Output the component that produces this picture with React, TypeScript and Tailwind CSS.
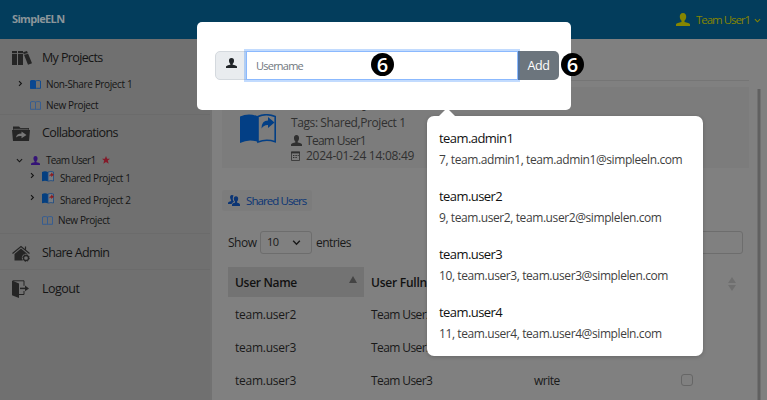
import React from "react";

const PersonIcon = ({ className }: { className: string }) => (
  <svg viewBox="0 0 14 13" preserveAspectRatio="none" fill="currentColor" className={`shrink-0 ${className}`}>
    <path d="M7 0C4.700 0 3.600 1.700 3.800 4c.15 1.600.8 2.900 1.700 3.700v1.200C3 9.400.3 10 0 11.200V13h14v-1.800c-.3-1.200-3-1.800-5.500-2.300V7.700c.9-.8 1.550-2.100 1.700-3.700C10.400 1.700 9.300 0 7 0z" />
  </svg>
);

const BookIcon = ({ className, half }: { className: string; half?: boolean }) => (
  <svg viewBox="0 0 11 9" className={`shrink-0 ${className}`} fill="none" stroke="currentColor" strokeWidth="0.9">
    <path d="M.5 1C2.500.3 4.200.4 5.500 1.100 6.800.4 8.500.3 10.500 1v7.300H6.600l-1.100.3-1.100-.3H.5z" />
    <path d="M5.500 1.100v7.200" />
    {half && <path d="M.5 1C2.500.3 4.200.4 5.500 1.100v7.200H.5z" fill="currentColor" />}
  </svg>
);

const SharedBook = () => (
  <svg viewBox="0 0 12 11" className="h-[11px] w-[12px] shrink-0">
    <path d="M0 1Q3-.3 6 1v9.300Q3 9 0 10.300z" fill="#043f80" />
    <path d="M6 1Q9-.2 11.500 1v9Q9 9 6 10.200z" fill="#777c82" stroke="#1b4a84" strokeWidth="0.8" />
    <path d="M7.200 5.500q0-2.500 2-2.500V1.500L12 3.700 9.200 6V4.500q-1.200 0-2 1z" fill="#8b1d20" />
  </svg>
);

const Chevron = ({ className = "", down, size = 7 }: { className?: string; down?: boolean; size?: number }) => (
  <svg width={size} height={size} viewBox="0 0 7 7" fill="none" stroke="currentColor" strokeWidth="1.1" className={`shrink-0 ${className}`}>
    <path d={down ? "M.9 2.200 3.500 4.800 6.100 2.200" : "M2 1.100 4.400 3.500 2 5.900"} />
  </svg>
);

const Six = () => (
  <span className="flex size-[23px] items-center justify-center rounded-full bg-black font-['Open_Sans'] text-[20px] leading-none font-semibold text-white">
    6
  </span>
);

const suggestions = [
  { name: "team.admin1", detail: "7, team.admin1, team.admin1@simpleeln.com" },
  { name: "team.user2", detail: "9, team.user2, team.user2@simplelen.com" },
  { name: "team.user3", detail: "10, team.user3, team.user3@simplelen.com" },
  { name: "team.user4", detail: "11, team.user4, team.user4@simpleln.com" },
];

const users = [
  { name: "team.user2", full: "Team User2", mode: "" },
  { name: "team.user3", full: "Team User3", mode: "" },
  { name: "team.user3", full: "Team User3", mode: "write" },
];

function Sidebar() {
  return (
    <aside className="w-[210px] shrink-0 bg-[#707070] text-[#151515]">
      <div className="flex h-[37px] items-center pl-3 pt-px">
        <svg viewBox="0 0 20 14" className="h-[14px] w-5" fill="#252525">
          <path d="M0 0h5v14H0zM6 0h5v14H6zM11 1.300 15 0l5 12.300-4 1.400z" />
          <path d="M0 2.500h5M6 2.500h5M12 3.500l4-1.200" stroke="#707070" strokeWidth=".8" />
        </svg>
        <span className="ml-[10px] text-[12.5px] tracking-[-0.05em]">My Projects</span>
      </div>
      <div className="flex h-[17px] items-center pl-[17px] text-[10px] tracking-[-0.037em]">
        <Chevron className="mt-[-2px]" />
        <BookIcon half className="ml-[6px] h-[9px] w-[11px] text-[#0a4791]" />
        <span className="ml-[5px]">Non-Share Project 1</span>
      </div>
      <div className="flex h-[22px] items-center border-b border-[#6b6b6b] pl-[30px] pt-[4px] text-[10px]">
        <BookIcon className="h-[9px] w-[11px] text-[#315b94]" />
        <span className="ml-[5px] tracking-[-0.035em]">New Project</span>
      </div>
      <div className="flex h-[36px] items-center pt-px pl-3">
        <svg viewBox="0 0 18 15" className="h-[15px] w-[18px]">
          <path d="M1 2V.5h6L8.500 2H17v2h1l-1 11H1L0 4h1z" fill="#252525" />
          <path d="M1.500 3.300h15" stroke="#707070" strokeWidth=".7" />
          <path d="M4 11.500q.5-4 5.500-4V5.500L14.500 9l-5 3.300v-2.200q-3.500-.2-5.500 1.400z" fill="#777" />
        </svg>
        <span className="ml-3 text-[12.5px] tracking-[-0.05em]">Collaborations</span>
      </div>
      <div className="flex h-[18px] items-center pl-4 text-[10px]">
        <Chevron down />
        <PersonIcon className="ml-[8px] h-[9px] w-[9px] text-[#351477]" />
        <span className="ml-[6px] tracking-[-0.065em]">Team User1</span>
        <svg viewBox="0 0 24 24" className="ml-[6px] size-[8px]" fill="#841b2a"><path d="m12 0 3.500 8H24l-6.500 5.700L20 23l-8-5-8 5 2.500-9.300L0 8h8.500z" /></svg>
      </div>
      {["Shared Project 1", "Shared Project 2"].map((name) => (
        <div key={name} className="flex h-[22px] items-center pb-[6px] pl-[29px] text-[10px]">
          <Chevron className="mt-[-3px]" />
          <span className="ml-[6px] flex -translate-y-px"><SharedBook /></span>
          <span className="ml-[6px] pt-[2px] tracking-[-0.037em]">{name}</span>
        </div>
      ))}
      <div className="flex h-[21px] items-center border-b border-[#6b6b6b] pb-[5px] pl-[42px] text-[10px]">
        <BookIcon className="h-[9px] w-[11px] text-[#315b94]" />
        <span className="ml-[5px] tracking-[-0.04em]">New Project</span>
      </div>
      <div className="flex h-[36px] items-center border-b border-[#6b6b6b] pl-3 pt-[3px]">
        <svg viewBox="0 0 18 17" className="h-[17px] w-[18px]" fill="#252525">
          <path d="M2.500 9 9 3.500 15.500 9v6.500h-13z" />
          <path d="m.5 8.500 8.500-7 8.500 7M13.500 4.500v-3" fill="none" stroke="#252525" strokeWidth="1.200" />
          <circle cx="14" cy="13" r="2.700" fill="#707070" stroke="#707070" strokeWidth="3" />
          <circle cx="14" cy="13" r="2.500" fill="#707070" stroke="#252525" strokeWidth="1.300" />
          <circle cx="14" cy="13" r="3.300" fill="none" stroke="#252525" strokeDasharray="1.3 1.3" />
        </svg>
        <span className="ml-3 text-[12.5px] tracking-[-0.055em]">Share Admin</span>
      </div>
      <div className="flex h-[36px] items-center pl-3 pt-[2px]">
        <svg viewBox="0 0 17 18" className="h-[18px] w-[17px]">
          <path d="m0 .5 7 3V18l-7-2.800z" fill="#252525" />
          <path d="M1 .8h11v5M12 11v3.500H7" fill="none" stroke="#252525" />
          <path d="M8 8.400h6" stroke="#252525" strokeWidth="1.500" />
          <path d="m13 5.600 4 2.800-4 2.800z" fill="#252525" />
        </svg>
        <span className="ml-[13px] pt-px text-[12.5px] tracking-[-0.04em]">Logout</span>
      </div>
    </aside>
  );
}

function Main() {
  return (
    <main className="relative flex-1 border-l-2 border-[#727272] bg-[#808080] text-[12px] text-[#191919]">
      <div className="ml-4 mr-[18px] h-[42px] border-b border-[#757575]" />
      <section className="ml-[10px] mr-[18px] mt-[6px] flex h-[81px] bg-[#7c7c7c] pl-[18px]">
        <svg viewBox="0 0 36 30" className="mt-[27px] h-[30px] w-9 shrink-0">
          <path d="M0 2.500Q9-1.500 18 2.500v25.500Q9 24.500 0 29z" fill="#033f85" />
          <path d="M18 2.500q8-3.500 17.200 0v25.200q-9-3-17.200.3z" fill="none" stroke="#033f85" strokeWidth="1.600" />
          <path d="M21.500 14.500q0-8 6.500-8V3l6.500 5.500-6.500 5.500v-3q-4-.4-6.500 3.500z" fill="#033f85" />
        </svg>
        <div className="ml-[15px] text-[#303030]">
          <h2 className="h-[27px] pt-[3px] text-[15px] leading-[24px] font-semibold tracking-[-0.05em]">Shared Project 1, 2024</h2>
          <p className="h-[18px] leading-[18px] tracking-[-0.034em]">Tags: Shared,Project 1</p>
          <p className="flex h-[17px] items-center leading-[17px] tracking-[-0.06em]"><PersonIcon className="mr-[4px] h-[11px] w-[11px]" />Team User1</p>
          <p className="flex h-[13px] items-center leading-[13px]">
            <svg viewBox="0 0 9 10" className="mr-[6px] h-[10px] w-[9px] shrink-0"><path d="M.5 1h8v8.500h-8z" fill="none" stroke="#303030" strokeWidth=".8" /><path d="M0 1.500h9" stroke="#303030" strokeWidth="1.800" /><path d="M2 4.500h6M2 6.500h4" stroke="#303030" strokeDasharray="1 .6" /></svg>
            <span className="tracking-[-0.022em]">2024-01-24 14:08:49</span>
          </p>
        </div>
      </section>
      <div className="ml-[10px] mt-[22px] flex h-[21px] w-[90px] items-center rounded-[2px] bg-[#7c7c7c] pl-[6px] text-[#0b3575]">
        <svg viewBox="0 0 12 11" className="h-[11px] w-[12px] shrink-0" fill="currentColor">
          <path d="M4 0C2.300 0 1.800 1.500 2.200 3c.2 1 .6 1.600.9 2v1C1.500 6.500.2 7 0 8v1h3.500q.7-1.500 2.300-2l.1-.4C4.900 5.400 4.500 4 4.900 2.400 5 1.600 5.300 1.100 5.700.8 5.300.3 4.700 0 4 0z" />
          <path d="M8 1.200c-1.700 0-2.500 1.400-2.100 3 .2 1.200.6 1.800 1.100 2.300v1C5.500 8 4 8.600 4 9.700V11h8V9.700c0-1.100-1.500-1.700-3-2.200v-1c.5-.5.9-1.100 1.100-2.300.4-1.600-.4-3-2.100-3z" />
        </svg>
        <span className="ml-[6px] text-[11.5px] tracking-[-0.08em]">Shared Users</span>
      </div>
      <div className="ml-4 mr-6 mt-[20px] flex h-[23px] items-center">
        <span className="w-[32px] tracking-[-0.04em]">Show</span>
        <div className="flex h-[23px] w-[52px] items-center justify-between rounded-[3px] border border-[#6d6d6d] pl-[6px] pr-[10px] text-[11px] tracking-[-0.04em]">
          10 <Chevron down size={9} />
        </div>
        <span className="ml-[4px] tracking-[-0.045em]">entries</span>
        <div className="ml-auto h-[23px] w-[100px] rounded-[3px] border border-[#6d6d6d]" />
      </div>
      <div className="ml-4 mr-[6px] mt-[13px]">
        <div className="flex h-[30px] items-center font-semibold text-[#111]">
          <div className="flex h-full w-[136px] items-center justify-between bg-[#737373] pt-[2px] pl-[7px] pr-[7px] tracking-[-0.025em]">
            User Name
            <span className="mb-[7px] border-x-4 border-b-[7px] border-x-transparent border-b-[#444]" />
          </div>
          <div className="w-[163px] pt-[2px] pl-[7px] tracking-[-0.02em]">User Fullname</div>
          <div className="ml-auto mr-[25px] mt-1 flex flex-col gap-[2px]">
            <span className="border-x-4 border-b-[6px] border-x-transparent border-b-[#6f6f6f]" />
            <span className="border-x-4 border-t-[6px] border-x-transparent border-t-[#6f6f6f]" />
          </div>
        </div>
        {users.map((u, i) => (
          <div key={i} className="flex h-[33px] items-center pt-[2px]">
            <div className="w-[136px] pl-[7px] tracking-[-0.02em]">{u.name}</div>
            <div className="w-[163px] pl-[7px] tracking-[-0.05em]">{u.full}</div>
            <div className="w-[154px] pl-[7px] tracking-[-0.04em]">{u.mode}</div>
            {u.mode && <span className="mt-[-2px] size-3 rounded-[3px] border border-[#666]" />}
          </div>
        ))}
      </div>
      <div className="absolute top-[50px] right-[6px] h-[311px] w-[4px] border-x border-[#707070] bg-[#606060]" />
    </main>
  );
}

function AddUserDialog() {
  return (
    <div className="absolute top-[22px] left-[197px] h-[88px] w-[374px] rounded-[5px] bg-white pt-[29px] pl-[18px]">
      <div className="flex h-[29px] w-[344px]">
        <div className="flex w-[32px] items-center justify-center rounded-l-[5px] border border-[#d4d9de] bg-[#e9ecef] pb-[6px] text-[#212529]">
          <PersonIcon className="h-[10px] w-[11px]" />
        </div>
        <div className="z-10 -ml-px flex w-[272px] items-center border border-[#8bb9fe] bg-white pl-[9px] pt-[2px] text-[11px] tracking-[-0.07em] text-[#70777e] shadow-[0_0_0_2px_rgba(13,110,253,.25)]">
          Username
        </div>
        <button className="w-[41px] rounded-r-[5px] bg-[#6c757d] pt-[2px] text-[12.5px] font-medium tracking-[-0.03em] text-white">Add</button>
      </div>
      <div className="absolute top-[31px] left-[174px] z-20"><Six /></div>
      <div className="absolute top-[31px] left-[364px] z-20"><Six /></div>
    </div>
  );
}

function Suggestions() {
  return (
    <div className="absolute top-[116px] left-[427px] h-[240px] w-[276px] rounded-[7px] bg-white pl-[12px] pt-[12px] shadow-[0_1px_4px_rgba(0,0,0,.2)]">
      <span className="absolute -top-[8px] left-[11px] border-x-[9px] border-b-[9px] border-x-transparent border-b-white" />
      {suggestions.map((s) => (
        <div key={s.name} className="h-[58px] whitespace-nowrap">
          <div className="text-[13px] leading-[20px] tracking-[-0.043em] text-[#111]">{s.name}</div>
          <div className="text-[12px] leading-[24px] tracking-[-0.034em] text-[#3f3f3f]">{s.detail}</div>
        </div>
      ))}
    </div>
  );
}

export default function App() {
  return (
    <div className="relative flex h-[400px] w-[767px] flex-col overflow-hidden bg-[#808080] font-['Open_Sans','Noto_Sans',sans-serif] whitespace-nowrap">
      <header className="flex h-[39px] shrink-0 items-center bg-[#033d5c] pl-3 pr-[6px]">
        <span className="text-[11px] font-bold tracking-[-0.06em] text-[#8b959a]">SimpleELN</span>
        <div className="ml-auto flex items-center text-[#858500]">
          <PersonIcon className="h-[13px] w-[14px]" />
          <span className="ml-[6px] w-[53px] text-[11.5px] tracking-[-0.09em]">Team User1</span>
          <Chevron down className="ml-[5px] mt-[2px]" />
        </div>
      </header>
      <div className="flex min-h-0 flex-1">
        <Sidebar />
        <Main />
      </div>
      <AddUserDialog />
      <Suggestions />
    </div>
  );
}
